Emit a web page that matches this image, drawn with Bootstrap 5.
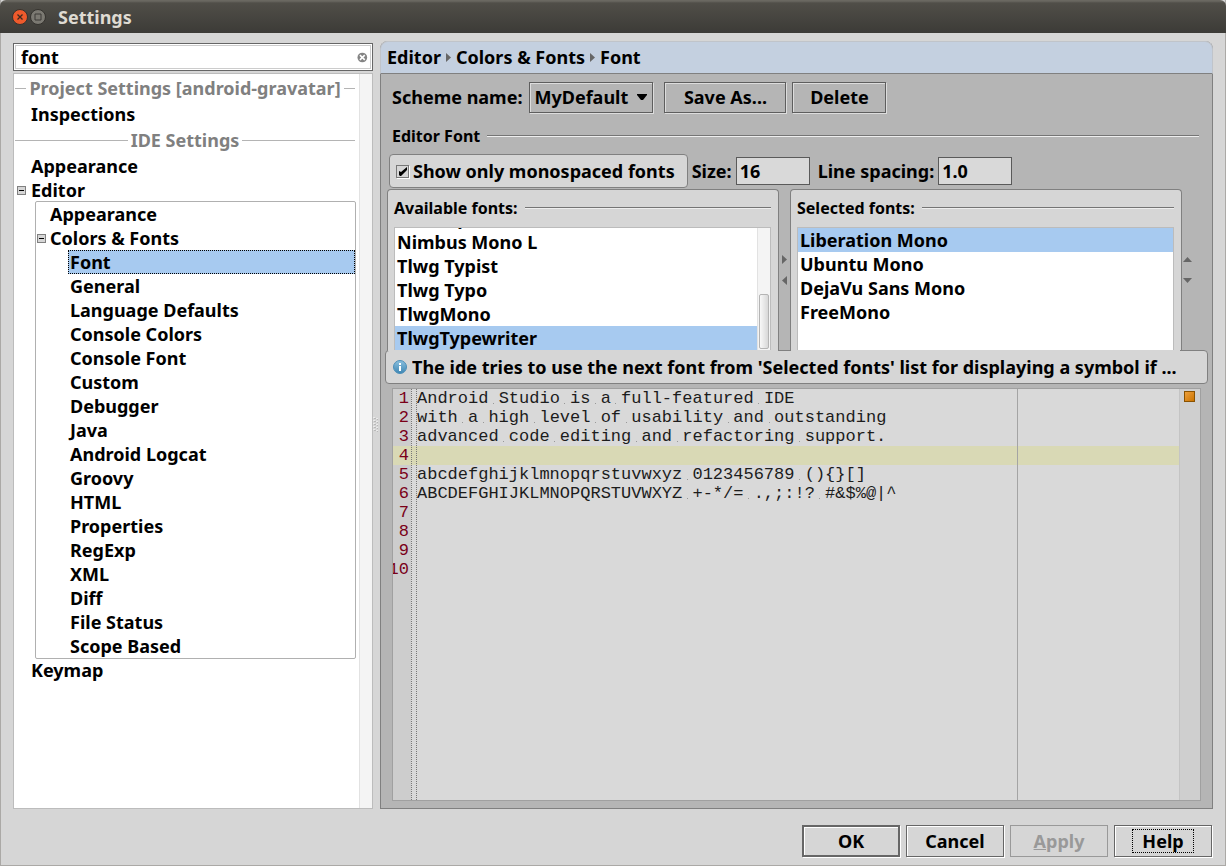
<!DOCTYPE html>
<html lang="en">
<head>
<meta charset="utf-8">
<meta name="viewport" content="width=device-width, initial-scale=1">
<title>Settings</title>
<link rel="stylesheet" href="https://cdn.jsdelivr.net/npm/bootstrap@5.3.0/dist/css/bootstrap.min.css">
<style>
  body { font: 700 18px/24px "Noto Sans", sans-serif; color: #000; background: #d6d6d6; }
  a { color: inherit; text-decoration: none; }
  .app-window { border: 1px solid #aba9a6; border-top: 0; }
  .title-bar { height: 33px; margin: 0 -1px; padding: 0 12px; gap: 2px; color: #dfdbd2; background: linear-gradient(#6a6861 0 1px, #504e48 3px, #3c3b37); border-radius: 6px 6px 0 0; }
  .title-bar h1 { font: inherit; margin: 0 0 0 10px; }
  .win-btn { width: 16px; height: 16px; padding: 0; border: 0; background: none; display: flex; }
  .content-area { padding: 8px 12px 0; gap: 7px; }
  .side-pane { flex: 0 0 30%; gap: 2px; padding-top: 2px; }
  .search-box { height: 28px; background: #fff; border: 1px solid #666; box-shadow: inset 0 0 0 1px #fff, inset 0 0 0 2px #ccc; padding: 0 4px 0 7px; }
  .search-box input { border: 0; background: none; outline: 0; font: inherit; padding: 0; }
  .tree-pane { background: #fff; border: 1px solid #bcbcbc; }
  .tree-body { padding: 0 4px 0 1px; }
  .track { width: 13px; background: #f4f4f4; border-left: 1px solid #e2e2e2; padding: 0 1px 1px; }
  .tree-head { height: 28px; color: #808080; gap: 3px; white-space: nowrap; }
  .tree-head::before, .tree-head::after { content: ""; flex: 1 1 0; min-width: 6px; height: 1px; background: #b4b4b4; }
  .tree-list a { display: block; height: 24px; padding-left: 2px; border: 1px dotted transparent; line-height: 22px; }
  .lvl-1 { padding-left: 13px; }
  .lvl-1 > li > a { display: inline-block; }
  .tree-group { border: 1px solid #b0b0b0; border-radius: 2px; margin: -1px -1px -1px 7px; }
  .lvl-2 > li > a { padding-left: 13px; }
  .lvl-3 a { margin-left: 32px; padding-left: 1px; }
  .tree-list a.current { background: #a7caf0; border-color: #000; }
  .lvl-1 .has-toggle { position: relative; }
  .toggle { position: absolute; top: 8px; width: 9px; height: 9px; padding: 0; border: 1px solid #808080; background: #d6d6d6; display: flex; align-items: center; justify-content: center; }
  .toggle::after { content: ""; width: 5px; height: 1px; background: #000; }
  .toggle-outer { left: -11px; }
  .toggle-inner { left: 1px; }
  .grip { position: absolute; left: -8px; top: 376px; }
  .detail-pane { position: relative; min-width: 0; border: 1px solid #808080; border-top: 0; border-radius: 8px 8px 0 0; background: #b5b5b5; }
  .crumbs { height: 33px; margin: 0 -1px; padding: 0 6px 1px; gap: 5px; background: #c4d0e0; border: 1px solid #c0c4ca; border-bottom-color: #808080; border-radius: 8px 8px 0 0; }
  .detail-body { padding: 7px 4px 7px 4px; min-width: 0; }
  .scheme-row { padding: 0 7px; height: 32px; }
  .scheme-row label { margin-right: 7px; }
  .etched { font: inherit; color: #000; border: 1px solid #5e5e5e; border-radius: 0; background-color: #b5b5b5; box-shadow: 1px 1px 0 #ddd, inset 1px 1px 0 #ddd; height: 31px; padding: 0; line-height: 28px; }
  .scheme-select { width: 124px; padding-left: 4px; appearance: none; background-repeat: no-repeat; background-position: right 5px center; background-image: url("data:image/svg+xml,%3Csvg xmlns='http://www.w3.org/2000/svg' width='10' height='6'%3E%3Cpath d='M0 0h10v1L6 6H4L0 1z'/%3E%3C/svg%3E"); }
  .w-save { width: 122px; margin: 0 6px 0 11px; } .w-delete { width: 94px; }
  .group-head { gap: 7px; font-size: 16px; font-weight: 700; line-height: 22px; margin: 0; }
  .group-head::after { content: ""; flex: 1; height: 2px; border-top: 1px solid #757575; border-bottom: 1px solid #eee; }
  .editor-head { padding: 12px 9px 7px 7px; }
  .soft-box { border: 1px solid #808080; border-radius: 4px; background: #d6d6d6; }
  .check-box { height: 34px; padding: 0 12px 0 6px; gap: 4px; margin-left: 4px; }
  .check-box input { appearance: none; width: 13px; height: 13px; margin: 0; border: 1px solid #777; box-shadow: 1px 1px 0 #fff; background: #d6d6d6 url("data:image/svg+xml,%3Csvg xmlns='http://www.w3.org/2000/svg' width='11' height='11'%3E%3Cpath d='M2 5v4l1 1h1l6-6V1L4 6z'/%3E%3C/svg%3E") center no-repeat; }
  .num-field { width: 74px; height: 28px; font: inherit; color: #000; background: #d9d9d9; border: 1px solid #5a5a5a; border-radius: 0; padding: 0 3px; margin-left: 4px; }
  .font-cols { margin: 1px 26px 0 2px; }
  .font-panel { flex: 1 1 0; min-width: 0; border-bottom: 0; border-radius: 4px 4px 0 0; padding: 7px 7px 0 6px; height: 162px; }
  .move-btns { width: 11px; gap: 12px; }
  .move-btns button, .order-btns button { border: 0; background: none; padding: 0; display: flex; }
  .order-btns { position: absolute; right: -10px; top: 68px; display: flex; flex-direction: column; gap: 16px; }
  .font-list { height: 124px; margin-top: 8px; background: #fff; border: 1px solid #bcbcbc; overflow: hidden; }
  .font-list ul { min-width: 0; }
  .font-list li { padding-left: 2px; flex: 0 0 24px; line-height: 24px; }
  .font-list li[aria-selected=true] { background: #a7caf0; }
  .thumb { height: 55px; border: 1px solid #b4b4b4; border-radius: 2px; background: linear-gradient(90deg, #f8f8f8, #d8d8d8); }
  .hint { position: relative; height: 34px; margin-top: -1px; padding: 0 10px 0 7px; gap: 5px; }
  .hint::before { content: ""; position: absolute; top: -1px; left: 2px; width: calc((100% - 36px) / 2 - 3px); height: 1px; background: #d6d6d6; }
  .hint::after { content: ""; position: absolute; top: -1px; right: 27px; width: calc((100% - 36px) / 2 - 3px); height: 1px; background: #d6d6d6; }
  .editor { margin: 4px 7px 0; border: 1px solid #a0a0a0; background: #d9d9d9; font: 400 17px/19px "Liberation Mono", monospace; }
  .code-lines { min-width: 0; position: relative; background: linear-gradient(90deg, #cdcdcd 18px, transparent 18px); }
  .code-lines::before { content: ""; position: absolute; top: 0; bottom: 0; left: 18px; width: 6px; border: solid #777; border-width: 0 1px; border-style: dotted; }
  .code-lines::after { content: ""; position: absolute; top: 0; bottom: 0; left: 624px; width: 1px; background: #a4a4a4; }
  .code-lines li { display: flex; height: 19px; white-space: pre; }
  .code-lines li.caret-line { background: #d9d9b5; }
  .code-lines code { font: inherit; color: #1c1c1c; }
  .line-no { width: 16px; flex: none; margin-right: 8px; color: #7a0018; display: flex; justify-content: flex-end; overflow: hidden; }
  .space { background: linear-gradient(#999, #999) 50% 14px / 1px 1px no-repeat; }
  .stripe { width: 21px; background: #cfcfcf; border-left: 1px solid #c4c4c4; padding: 2px 4px; }
  .stripe span { display: block; width: 11px; height: 11px; border: 1px solid #8a5200; background: linear-gradient(135deg, #eda03c, #cc7400); }
  .footer-bar { padding: 16px 13px 8px; gap: 6px; }
  .footer-bar button { width: 98px; height: 32px; font: inherit; color: #000; padding: 0; border: 1px solid #666; background: #d6d6d6; box-shadow: 1px 1px 0 #fff, inset 1px 1px 0 #fff; }
  .footer-bar .default-btn { border-width: 2px; }
  .footer-bar button:disabled { color: #999; border-color: #999; box-shadow: none; }
  .focus-box { display: inline-block; outline: 1px dotted #000; padding: 0 9px; line-height: 22px; }
</style>
</head>
<body>
<div class="app-window min-vh-100 d-flex flex-column">
  <header class="title-bar d-flex align-items-center">
    <button class="win-btn" aria-label="Close"><svg width="16" height="16" viewBox="0 0 16 16"><circle cx="8" cy="8" r="7.5" fill="#ee5a2c" stroke="#34322e"/><path d="M5.5 5.5l5 5m0-5l-5 5" stroke="#3c2a20" stroke-width="1.3"/></svg></button>
    <button class="win-btn" aria-label="Maximize"><svg width="16" height="16" viewBox="0 0 16 16"><circle cx="8" cy="8" r="7.5" fill="#7b7972" stroke="#34322e"/><path d="M5 5h6v6H5z" fill="none" stroke="#3c3b37"/></svg></button>
    <h1>Settings</h1>
  </header>
  <main class="content-area d-flex flex-grow-1">
    <aside class="side-pane d-flex flex-column">
      <div class="search-box d-flex align-items-center">
        <input class="flex-grow-1 w-100" type="text" value="font" aria-label="Search settings">
        <svg width="11" height="11" viewBox="0 0 11 11"><circle cx="5.500" cy="5.500" r="5" fill="#848484"/><path d="M3 3l5 5m0-5L3 8" stroke="#fff" stroke-width="1.6"/></svg>
      </div>
      <div class="tree-pane d-flex flex-grow-1">
        <nav class="tree-body flex-grow-1" aria-label="Settings tree">
          <div class="tree-head d-flex align-items-center">Project Settings [android-gravatar]</div>
          <ul class="tree-list lvl-1 list-unstyled m-0"><li><a href="#">Inspections</a></li></ul>
          <div class="tree-head d-flex align-items-center">IDE Settings</div>
          <ul class="tree-list lvl-1 list-unstyled m-0">
            <li><a href="#">Appearance</a></li>
            <li class="has-toggle"><button class="toggle toggle-outer" aria-label="Collapse Editor"></button><a href="#">Editor</a>
              <div class="tree-group">
                <ul class="lvl-2 list-unstyled m-0">
                  <li><a href="#">Appearance</a></li>
                  <li class="has-toggle"><button class="toggle toggle-inner" aria-label="Collapse Colors &amp; Fonts"></button><a href="#">Colors &amp; Fonts</a>
                    <ul class="lvl-3 list-unstyled m-0">
                      <li><a class="current" href="#">Font</a></li>
                      <li><a href="#">General</a></li>
                      <li><a href="#">Language Defaults</a></li>
                      <li><a href="#">Console Colors</a></li>
                      <li><a href="#">Console Font</a></li>
                      <li><a href="#">Custom</a></li>
                      <li><a href="#">Debugger</a></li>
                      <li><a href="#">Java</a></li>
                      <li><a href="#">Android Logcat</a></li>
                      <li><a href="#">Groovy</a></li>
                      <li><a href="#">HTML</a></li>
                      <li><a href="#">Properties</a></li>
                      <li><a href="#">RegExp</a></li>
                      <li><a href="#">XML</a></li>
                      <li><a href="#">Diff</a></li>
                      <li><a href="#">File Status</a></li>
                      <li><a href="#">Scope Based</a></li>
                    </ul>
                  </li>
                </ul>
              </div>
            </li>
            <li><a href="#">Keymap</a></li>
          </ul>
        </nav>
        <div class="track"></div>
      </div>
    </aside>
    <section class="detail-pane d-flex flex-column flex-grow-1">
      <svg class="grip" width="5" height="15" viewBox="0 0 5 15"><path d="M1 0v15M4 1v14" stroke="#fff" stroke-dasharray="1 2"/><path d="M2 1v14M5 2v13" stroke="#999" stroke-dasharray="1 2"/></svg>
      <div class="crumbs d-flex align-items-center">
        <span>Editor</span><svg width="5" height="9"><path d="M0 0l5 4.500L0 9z" fill="#666"/></svg>
        <span>Colors &amp; Fonts</span><svg width="5" height="9"><path d="M0 0l5 4.500L0 9z" fill="#666"/></svg>
        <span>Font</span>
      </div>
      <div class="detail-body d-flex flex-column flex-grow-1">
        <div class="scheme-row d-flex align-items-center">
          <label for="scheme">Scheme name:</label>
          <select class="etched scheme-select" id="scheme"><option>MyDefault</option></select>
          <button class="etched w-save">Save As...</button>
          <button class="etched w-delete">Delete</button>
        </div>
        <h2 class="group-head editor-head d-flex align-items-center">Editor Font</h2>
        <div class="d-flex align-items-center">
          <label class="soft-box check-box d-flex align-items-center me-1"><input type="checkbox" checked>Show only monospaced fonts</label>
          <label for="size">Size:</label><input class="num-field me-2" id="size" type="text" value="16">
          <label for="spacing">Line spacing:</label><input class="num-field" id="spacing" type="text" value="1.0">
        </div>
        <div class="font-cols d-flex position-relative">
          <div class="soft-box font-panel">
            <h3 class="group-head d-flex align-items-center">Available fonts:</h3>
            <div class="font-list d-flex">
              <ul class="list-unstyled m-0 flex-grow-1 d-flex flex-column justify-content-end" role="listbox" aria-label="Available fonts">
                <li role="option">Monospaced</li>
                <li role="option">Nimbus Mono L</li>
                <li role="option">Tlwg Typist</li>
                <li role="option">Tlwg Typo</li>
                <li role="option">TlwgMono</li>
                <li role="option" aria-selected="true">TlwgTypewriter</li>
              </ul>
              <div class="track d-flex flex-column justify-content-end"><div class="thumb"></div></div>
            </div>
          </div>
          <div class="move-btns d-flex flex-column align-items-center justify-content-center">
            <button aria-label="Add font"><svg width="5" height="9"><path d="M0 0l5 4.500L0 9z" fill="#666"/></svg></button>
            <button aria-label="Remove font"><svg width="5" height="9"><path d="M5 0L0 4.500L5 9z" fill="#666"/></svg></button>
          </div>
          <div class="soft-box font-panel">
            <h3 class="group-head d-flex align-items-center">Selected fonts:</h3>
            <div class="font-list d-flex">
              <ul class="list-unstyled m-0 flex-grow-1 d-flex flex-column" role="listbox" aria-label="Selected fonts">
                <li role="option" aria-selected="true">Liberation Mono</li>
                <li role="option">Ubuntu Mono</li>
                <li role="option">DejaVu Sans Mono</li>
                <li role="option">FreeMono</li>
              </ul>
            </div>
          </div>
          <div class="order-btns">
            <button aria-label="Move up"><svg width="9" height="5"><path d="M0 5l4.500-5L9 5z" fill="#666"/></svg></button>
            <button aria-label="Move down"><svg width="9" height="5"><path d="M0 0l4.500 5L9 0z" fill="#666"/></svg></button>
          </div>
        </div>
        <div class="soft-box hint d-flex align-items-center">
          <svg class="flex-shrink-0" width="14" height="14" viewBox="0 0 14 14"><defs><linearGradient id="info" x2="0" y2="1"><stop stop-color="#8cc0de"/><stop offset="1" stop-color="#3d86b4"/></linearGradient></defs><circle cx="7" cy="7" r="6.500" fill="url(#info)" stroke="#4d8fb8"/><path d="M6 3h2v2H6zM6 6h2v5H6z" fill="#fff"/></svg>
          <span class="text-truncate">The ide tries to use the next font from 'Selected fonts' list for displaying a symbol if ...</span>
        </div>
        <div class="editor d-flex flex-grow-1">
          <ol class="code-lines list-unstyled m-0 flex-grow-1" id="code">
            <li><span class="line-no">1</span><code>Android Studio is a full-featured IDE</code></li>
            <li><span class="line-no">2</span><code>with a high level of usability and outstanding</code></li>
            <li><span class="line-no">3</span><code>advanced code editing and refactoring support.</code></li>
            <li class="caret-line"><span class="line-no">4</span></li>
            <li><span class="line-no">5</span><code>abcdefghijklmnopqrstuvwxyz 0123456789 (){}[]</code></li>
            <li><span class="line-no">6</span><code>ABCDEFGHIJKLMNOPQRSTUVWXYZ +-*/= .,;:!? #&amp;$%@|^</code></li>
            <li><span class="line-no">7</span></li>
            <li><span class="line-no">8</span></li>
            <li><span class="line-no">9</span></li>
            <li><span class="line-no">10</span></li>
          </ol>
          <div class="stripe"><span></span></div>
        </div>
      </div>
    </section>
  </main>
  <footer class="footer-bar d-flex justify-content-end">
    <button class="default-btn">OK</button>
    <button>Cancel</button>
    <button disabled><u>A</u>pply</button>
    <button><span class="focus-box">Help</span></button>
  </footer>
</div>
<script>
  // Mark every space in the preview with a whitespace dot
  document.querySelectorAll('#code code').forEach(function (line) {
    line.innerHTML = line.innerHTML.replace(/ /g, '<span class="space"> </span>');
  });
</script>
<script src="https://cdn.jsdelivr.net/npm/bootstrap@5.3.0/dist/js/bootstrap.bundle.min.js"></script>
</body>
</html>
